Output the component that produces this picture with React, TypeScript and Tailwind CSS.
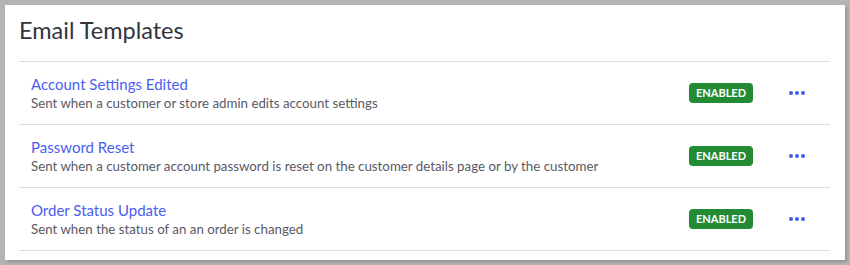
import React from "react";

const rows = [
  { title: "Account Settings Edited", desc: "Sent when a customer or store admin edits account settings" },
  { title: "Password Reset", desc: "Sent when a customer account password is reset on the customer details page or by the customer" },
  { title: "Order Status Update", desc: "Sent when the status of an an order is changed" },
];

export default function App() {
  return (
    <div className="h-[265px] w-[850px] bg-[#b4b4b4] pt-[5px] pl-[5px]" style={{ fontFamily: "Lato, 'Open Sans', sans-serif" }}>
      <div className="w-[840px] h-[255px] bg-white shadow-[2px_2px_3px_rgba(0,0,0,0.18)] pl-[14px] pr-[15px] pt-[9px]">
        <h1 className="text-[23.5px] leading-[32px] text-[#33343d] pb-[15px]">Email Templates</h1>
        <div className="border-t border-[#d9dbe9]">
          {rows.map((r) => (
            <div key={r.title} className="h-[63px] border-b border-[#d9dbe9] flex items-center pl-[12px]">
              <div className="flex-1 flex flex-col">
                <a className="text-[15px] leading-[20px] text-[#4b5ef2]">{r.title}</a>
                <span className="text-[13.3px] leading-[18px] text-[#595a66]">{r.desc}</span>
              </div>
              <span className="w-[64px] h-[20px] rounded-[4px] bg-[#228b34] text-white text-[11px] font-bold flex items-center justify-center mr-[36px]">ENABLED</span>
              <span className="flex gap-[2px] mr-[25px]">
                <span className="w-[4px] h-[4px] rounded-full bg-[#3d5af1]" />
                <span className="w-[4px] h-[4px] rounded-full bg-[#3d5af1]" />
                <span className="w-[4px] h-[4px] rounded-full bg-[#3d5af1]" />
              </span>
            </div>
          ))}
        </div>
      </div>
    </div>
  );
}
